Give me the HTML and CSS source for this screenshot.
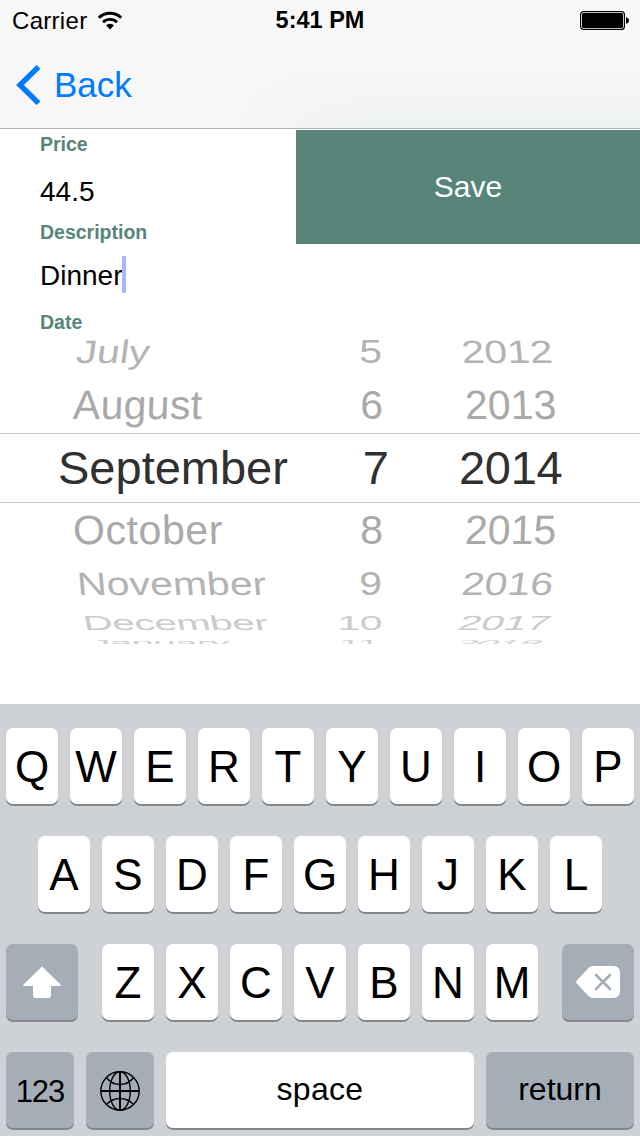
FILE: index.html
```
<!DOCTYPE html>
<html lang="en">
<head>
  <meta charset="UTF-8">
  <meta name="viewport" content="width=device-width, initial-scale=1.0">
  <title>Edit expense</title>
  <link rel="stylesheet" href="styles.css">
</head>
<body>

<header class="header">
  <div class="status">
    <div class="carrier">
      <span>Carrier</span>
      <svg class="wifi" width="26" height="20" viewBox="0 0 26 20">
        <path d="M1.800 6.700a16 16 0 0 1 22.400 0" fill="none" stroke="#000" stroke-width="3"/>
        <path d="M6 11.200a10 10 0 0 1 14 0" fill="none" stroke="#000" stroke-width="2.800"/>
        <path d="M9 14.300a6 6 0 0 1 8 0L13 18.600z"/>
      </svg>
    </div>
    <div class="time">5:41 PM</div>
    <svg class="battery" width="50" height="20" viewBox="0 0 50 20">
      <rect x=".6" y=".6" width="43.8" height="17.8" rx="3" fill="#fff" stroke="#000" stroke-width="1.2"/>
      <rect x="2" y="2" width="41" height="15" rx="1.5"/>
      <path d="M46 6.200c4 .8 4 5.800 0 6.600z"/>
    </svg>
  </div>
  <div class="nav">
    <svg width="26" height="40" viewBox="0 0 26 40">
      <path d="M22.500 1.900 4 20l18.500 18.100" fill="none" stroke="#007aff" stroke-width="5.400"/>
    </svg>
    <span class="back">Back</span>
  </div>
</header>

<main class="form">
  <div class="fields">
    <label class="label">Price</label>
    <div class="value">44.5</div>
    <label class="label desc">Description</label>
    <div class="value name">Dinner<i class="caret"></i></div>
    <label class="label date">Date</label>
  </div>
  <button class="save">Save</button>
</main>

<section class="picker">
  <div class="row r1"><span class="month">July</span><span class="day">5</span><span class="year">2012</span></div>
  <div class="row r2"><span class="month">August</span><span class="day">6</span><span class="year">2013</span></div>
  <div class="row selected"><span class="month">September</span><span class="day">7</span><span class="year">2014</span></div>
  <div class="row r4"><span class="month">October</span><span class="day">8</span><span class="year">2015</span></div>
  <div class="row r5"><span class="month">November</span><span class="day">9</span><span class="year">2016</span></div>
  <div class="row r6"><span class="month">December</span><span class="day">10</span><span class="year">2017</span></div>
  <div class="row r7"><span class="month">January</span><span class="day">11</span><span class="year">2018</span></div>
</section>

<section class="keyboard">
  <div class="keys">
    <div class="key">Q</div><div class="key">W</div><div class="key">E</div><div class="key">R</div><div class="key">T</div><div class="key">Y</div><div class="key">U</div><div class="key">I</div><div class="key">O</div><div class="key">P</div>
  </div>
  <div class="keys">
    <div class="key">A</div><div class="key">S</div><div class="key">D</div><div class="key">F</div><div class="key">G</div><div class="key">H</div><div class="key">J</div><div class="key">K</div><div class="key">L</div>
  </div>
  <div class="keys">
    <div class="key dark shift">
      <svg width="38" height="32" viewBox="0 0 38 32">
        <path d="M19 .5 37.500 18.500q.8 1.300-.8 1.500H28v9q0 3-3 3H13q-3 0-3-3v-9H1.300Q-.3 19.800.5 18.500z" fill="#fff"/>
      </svg>
    </div>
    <div class="key">Z</div><div class="key">X</div><div class="key">C</div><div class="key">V</div><div class="key">B</div><div class="key">N</div><div class="key">M</div>
    <div class="key dark delete">
      <svg width="44" height="32" viewBox="0 0 44 32">
        <path d="M17 0h20q7 0 7 7v18q0 7-7 7H17q-2.500 0-4.500-2L.6 17.300q-1-1.300 0-2.600L12.500 2q2-2 4.500-2z" fill="#fff"/>
        <path d="m20 9 14 14M34 9 20 23" stroke="#a5adb7" stroke-width="2.600" stroke-linecap="round"/>
      </svg>
    </div>
  </div>
  <div class="keys">
    <div class="key dark num">123</div>
    <div class="key dark globe">
      <svg width="40" height="40" viewBox="0 0 40 40" fill="none" stroke="#000" stroke-width="1.400">
        <circle cx="20" cy="20" r="19.200"/>
        <path d="M20 1v38M1 20h38" stroke-width="1.900"/>
        <ellipse cx="20" cy="20" rx="10.300" ry="19.200"/>
        <path d="M6.500 6.700Q12 13.500 20 13.500T33.500 6.700M6.500 33.300Q12 27.500 20 27.500T33.500 33.300"/>
      </svg>
    </div>
    <div class="key space">space</div>
    <div class="key dark return">return</div>
  </div>
</section>

</body>
</html>
```
FILE: styles.css
```
* { box-sizing:border-box; }
body { margin:0; width:640px; height:1136px; overflow:hidden; display:flex; flex-direction:column; font-family:"Liberation Sans", Arial, sans-serif; background:#fff; color:#000; }
svg { display:block; }

/* header */
.header { height:129px; flex:none; border-bottom:1px solid #b2b2b2; background:linear-gradient(to right, #f7f7f7 230px, rgba(247,247,247,0) 370px), linear-gradient(#f7f7f7 70px, #eef2f1 128px); }
.status { height:41px; display:grid; grid-template-columns:1fr auto 1fr; align-items:center; padding:0 10px 0 12px; font-size:24px; line-height:41px; }
.carrier { display:flex; align-items:center; gap:10px; letter-spacing:.3px; }
.time { font-size:23.5px; font-weight:bold; margin-left:-2px; }
.battery { justify-self:end; }
.nav { height:87px; display:flex; align-items:center; padding-left:16px; color:#007aff; }
.back { font-size:35px; line-height:86px; margin-left:12px; }

/* form */
.form { display:flex; justify-content:space-between; height:204px; flex:none; padding:1px 0 0 40px; }
.fields { display:flex; flex-direction:column; }
.label { font-size:19.5px; font-weight:bold; line-height:28px; height:28px; color:#578579; }
.desc { height:16px; line-height:16px; }
.date { height:22px; line-height:22px; }
.value { font-size:28px; height:66px; line-height:67px; }
.name { height:71px; line-height:71px; position:relative; }
.caret { position:absolute; left:82px; top:16px; width:4px; height:37px; background:#a7b9f9; }
.save { width:344px; height:114px; border:none; padding:0; background:#578579; color:#fff; font:30px "Liberation Sans", Arial, sans-serif; }

/* date wheel, rows get flatter away from the middle */
.picker { height:371px; flex:none; padding-top:6px; font-size:41px; color:#a9a9a9; }
.row { display:grid; grid-template-columns:300px 100px 240px; white-space:nowrap; }
.row span { display:block; }
.month, .year { transform-origin:0 50%; }
.day { text-align:right; transform-origin:100% 50%; }
.r1 { height:38px; line-height:22px; color:#b3b3b3; }
.r1 .month { padding-left:76px; transform:scaleY(.79) skewX(-6deg); }
.r1 .day { padding-right:18px; transform:scaleY(.79); }
.r1 .year { padding-left:62px; transform:scaleY(.79) skewX(4deg); }
.r2 { height:56px; line-height:56px; }
.r2 .month { padding-left:73px; transform:skewX(-2deg); letter-spacing:.3px; }
.r2 .day { padding-right:17px; }
.r2 .year { padding-left:65px; transform:skewX(2deg); }
.selected { height:70px; line-height:68px; border:1px solid #c8c8c8; border-width:1px 0; font-size:47px; color:#303030; }
.selected .month { padding-left:58px; }
.selected .day { padding-right:11px; }
.selected .year { padding-left:59px; letter-spacing:-.3px; }
.r4 { height:55px; line-height:55px; }
.r4 .month { padding-left:73px; transform:skewX(1deg); letter-spacing:.6px; }
.r4 .day { padding-right:17px; }
.r4 .year { padding-left:65px; transform:skewX(-2deg); }
.r5 { height:49px; line-height:52px; color:#b3b3b3; }
.r5 .month { padding-left:77px; transform:scaleY(.79) skewX(4deg); }
.r5 .day { padding-right:18px; transform:scaleY(.79); }
.r5 .year { padding-left:62px; transform:scaleY(.79) skewX(-6deg); }
.r6 { height:30px; line-height:32px; color:#cbcbcb; }
.r6 .month { padding-left:83px; transform:scaleY(.5) skewX(6deg); letter-spacing:-.6px; }
.r6 .day { padding-right:18px; transform:scaleY(.5); letter-spacing:-.5px; }
.r6 .year { padding-left:59px; transform:scaleY(.5) skewX(-12deg); }
.r7 { height:7px; line-height:12px; color:#d0d0d0; overflow:hidden; }
.r7 .month { padding-left:90px; transform:scaleY(.2); letter-spacing:-1px; }
.r7 .day { padding-right:21px; transform:scaleY(.2); letter-spacing:-1px; }
.r7 .year { padding-left:55px; transform:scaleY(.2) skewX(-20deg); letter-spacing:-1.5px; }

/* keyboard */
.keyboard { height:432px; flex:none; padding-top:24px; background:#ced1d6; display:flex; flex-direction:column; gap:32px; }
.keys { display:flex; justify-content:center; gap:12px; }
.key { width:52px; height:76px; border-radius:7px; background:#fff; box-shadow:0 2px 0 #85878a; display:flex; align-items:center; justify-content:center; font-size:44px; line-height:76px; padding-top:2px; }
.dark { background:#a5adb7; }
.shift, .delete { width:72px; padding-top:0; }
.shift { margin-right:12px; }
.delete { margin-left:12px; }
.num, .globe { width:68px; }
.num { font-size:31px; letter-spacing:-1px; padding-top:3px; }
.space { width:308px; font-size:32px; letter-spacing:.3px; padding:0 0 3px; }
.return { width:148px; font-size:32px; padding:0 0 3px; }
```
